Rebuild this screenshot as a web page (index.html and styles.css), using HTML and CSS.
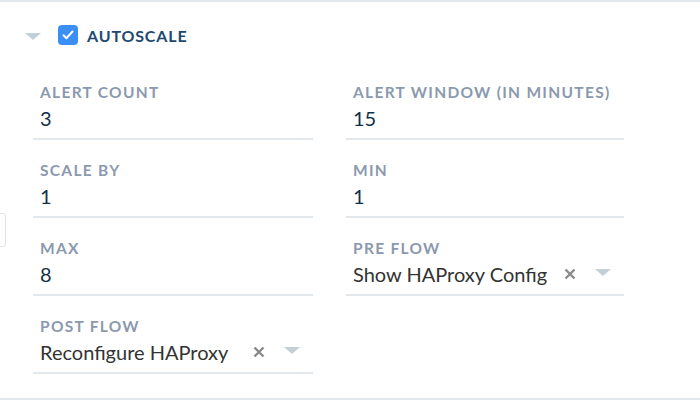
FILE: index.html
```html
<!DOCTYPE html>
<html>
<head>
<meta charset="utf-8">
<link rel="stylesheet" href="styles.css">
</head>
<body>
<div class="panel">
  <div class="side-tab"></div>
  <div class="header">
    <span class="caret"></span>
    <span class="checkbox">
      <svg width="12" height="10" viewBox="0 0 12 10"><path d="M1.5 5.2 L4.5 8.2 L10.5 1.5" fill="none" stroke="#fff" stroke-width="2" stroke-linecap="round" stroke-linejoin="round"/></svg>
    </span>
    <span class="title">AUTOSCALE</span>
  </div>
  <div class="grid">
    <div class="field">
      <div class="label">ALERT COUNT</div>
      <div class="value">3</div>
    </div>
    <div class="field">
      <div class="label">ALERT WINDOW (IN MINUTES)</div>
      <div class="value">15</div>
    </div>
    <div class="field">
      <div class="label">SCALE BY</div>
      <div class="value">1</div>
    </div>
    <div class="field">
      <div class="label">MIN</div>
      <div class="value">1</div>
    </div>
    <div class="field">
      <div class="label">MAX</div>
      <div class="value">8</div>
    </div>
    <div class="field">
      <div class="label">PRE FLOW</div>
      <div class="value select">
        <span class="sel-text">Show HAProxy Config</span>
        <span class="clear">
          <svg width="12" height="12" viewBox="0 0 12 12"><path d="M1.5 1.5 L10.5 10.5 M10.5 1.5 L1.5 10.5" stroke="#8a8a8a" stroke-width="2.4"/></svg>
        </span>
        <span class="sel-caret"></span>
      </div>
    </div>
    <div class="field">
      <div class="label">POST FLOW</div>
      <div class="value select">
        <span class="sel-text">Reconfigure HAProxy</span>
        <span class="clear">
          <svg width="12" height="12" viewBox="0 0 12 12"><path d="M1.5 1.5 L10.5 10.5 M10.5 1.5 L1.5 10.5" stroke="#8a8a8a" stroke-width="2.4"/></svg>
        </span>
        <span class="sel-caret"></span>
      </div>
    </div>
  </div>
</div>
</body>
</html>
```

FILE: styles.css
```css
html, body {
  margin: 0;
  padding: 0;
  background: #fff;
}
body {
  font-family: Lato, "Open Sans", sans-serif;
  width: 700px;
  height: 401px;
  overflow: hidden;
}
.panel {
  position: relative;
  height: 396px;
  border-top: 2px solid #e3e8ec;
  border-bottom: 2px solid #e3e8ec;
}
.side-tab {
  position: absolute;
  left: -8px;
  top: 211px;
  width: 12px;
  height: 32px;
  border: 1px solid #dfe4e8;
  border-radius: 3px;
  background: #fff;
}
.header {
  display: flex;
  align-items: center;
  height: 66px;
  padding-left: 25px;
  margin-bottom: 15px;
}
.caret {
  width: 0;
  height: 0;
  border-left: 8px solid transparent;
  border-right: 8px solid transparent;
  border-top: 7px solid #c3d0d8;
  margin-right: 17px;
  margin-top: 3px;
}
.checkbox {
  width: 20px;
  height: 20px;
  border-radius: 4px;
  background: #3b8ef3;
  display: flex;
  align-items: center;
  justify-content: center;
  margin-right: 9px;
}
.title {
  font-size: 16px;
  font-weight: 700;
  letter-spacing: 0.85px;
  color: #1d4a70;
}
.grid {
  display: grid;
  grid-template-columns: 280px 278px;
  column-gap: 33px;
  row-gap: 21px;
  padding-left: 33px;
}
.field {
  border-bottom: 2px solid #e3e8ec;
  padding: 0 0 8px 7px;
}
.label {
  font-size: 15.5px;
  line-height: 18px;
  font-weight: 700;
  letter-spacing: 1.3px;
  color: #8b99ae;
}
.value {
  font-size: 20px;
  line-height: 24px;
  margin-top: 5px;
  color: #13304a;
}
.select {
  display: flex;
  align-items: center;
  color: #333;
}
.sel-text {
  flex: 0 0 auto;
}
.clear {
  display: flex;
  margin-left: auto;
  margin-right: 19px;
}
.sel-caret {
  width: 0;
  height: 0;
  border-left: 8px solid transparent;
  border-right: 8px solid transparent;
  border-top: 7px solid #c3d0d8;
  margin-right: 13px;
  margin-top: -3px;
}
```
